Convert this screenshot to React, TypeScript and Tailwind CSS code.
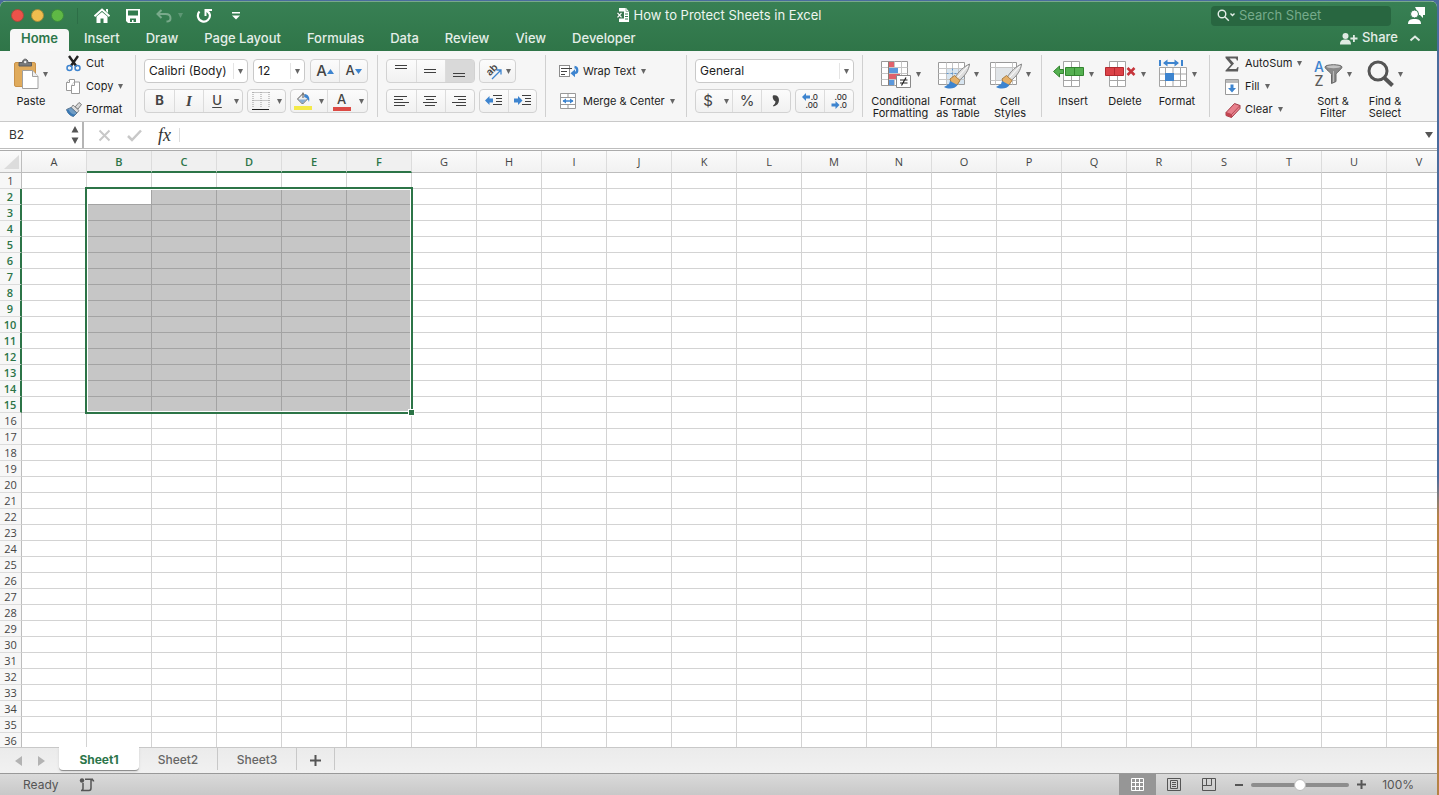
import React from 'react';

const COLUMNS = 'ABCDEFGHIJKLMNOPQRSTUV'.split('');
const ROWS = Array.from({ length: 36 }, (_, i) => i + 1);
const TABS = ['Home', 'Insert', 'Draw', 'Page Layout', 'Formulas', 'Data', 'Review', 'View', 'Developer'];
const SHEETS = ['Sheet1', 'Sheet2', 'Sheet3'];

const isSelectedCol = (i: number) => i >= 1 && i <= 5;
const isSelectedRow = (row: number) => row >= 2 && row <= 15;

const Caret = ({ className = 'text-[#666]' }: { className?: string }) => (
  <svg className={`shrink-0 ${className}`} width="5" height="5" viewBox="0 0 5 5" fill="currentColor">
    <path d="M0 0h5L2.500 5z" />
  </svg>
);

/* ---------- Title bar icons ---------- */

const HomeIcon = () => (
  <svg width="18" height="16" viewBox="0 0 18 16" fill="none">
    <path d="M1.500 8.200 9 1.600l7.500 6.600" stroke="#fff" strokeWidth="2" />
    <path d="M13 1h2v4l-2-2z" fill="#fff" />
    <path d="M3.500 8.500 9 4l5.500 4.500V15h-4v-4.500h-3V15h-4z" fill="#fff" />
  </svg>
);

const SaveIcon = () => (
  <svg width="14" height="14" viewBox="0 0 14 14">
    <path d="M0 0h14v14H2l-2-2z" fill="#fff" />
    <path d="M2 1.500h10v5H2zM4 9.500h6V13H7.500v-2H6v2H4z" fill="#337b4f" />
  </svg>
);

const UndoIcon = () => (
  <svg width="16" height="14" viewBox="0 0 16 14" fill="none" stroke="#79aa8b" strokeWidth="2">
    <path d="M5.500 1 1.500 5l4 4M2 5h7.500C13 5 14.500 7 14.500 9.200c0 2-1.500 3.300-4 3.300" />
  </svg>
);

const RedoIcon = () => (
  <svg width="17" height="16" viewBox="0 0 17 16" fill="none" stroke="#fff" strokeWidth="2.200">
    <path d="M3.500 3.500A6 6 0 1 0 13.800 6.500Q13 4 10 2.500" />
    <path d="M9.500 8V2H16" strokeWidth="2" />
  </svg>
);

const CustomizeIcon = () => (
  <svg width="8" height="8" viewBox="0 0 8 8" fill="#fff">
    <path d="M0 0h8v1.500H0zM0 3.500h8l-4 4z" />
  </svg>
);

const ExcelFileIcon = () => (
  <svg width="14" height="15" viewBox="0 0 14 15">
    <path d="M3 0h7l3 3.500V14H3z" fill="#fff" />
    <path d="M10 0v3.500h3" fill="none" stroke="#9db9a8" />
    <path d="M9 6h3M9 8.500h3M9 11h3" stroke="#377d54" />
    <path d="M0 3.500h8v7H0z" fill="#38754f" />
    <path d="m1.500 4.800 4 4.500m0-4.500-4 4.500" stroke="#fff" strokeWidth="1.200" />
  </svg>
);

const SearchIcon = () => (
  <svg width="19" height="13" viewBox="0 0 19 13" fill="none" stroke="#e4eee8" strokeWidth="1.400" className="shrink-0">
    <circle cx="5" cy="5" r="3.800" />
    <path d="m7.800 7.800 4 4M13.500 4.500l2 2 2-2" />
  </svg>
);

const FeedbackIcon = () => (
  <svg width="19" height="19" viewBox="0 0 19 19" fill="#fff">
    <path d="M8 1h10v8h-2v3l-3-3h-1z" />
    <circle cx="7.500" cy="8" r="4" stroke="#377d54" />
    <path d="M1 18c0-4 2.500-5 6.500-5s6.500 1 6.500 5z" />
  </svg>
);

const ShareIcon = () => (
  <svg width="18" height="13" viewBox="0 0 18 13" fill="#dfeae3">
    <circle cx="5.500" cy="4" r="3" />
    <path d="M0 12.500c0-4 2-5 5.500-5s5.500 1 5.500 5zM13 3h1.800v2.600h2.700v1.800h-2.700V10H13V7.400h-2.600V5.600H13z" />
  </svg>
);

/* ---------- Ribbon icons ---------- */

const PasteIcon = () => (
  <svg width="26" height="32" viewBox="0 0 26 32">
    <rect x="0.500" y="4.500" width="21" height="24" rx="1.500" fill="#e0ab5c" stroke="#c9924a" />
    <path d="M5 8V4.500h3.500C8.500 0 14 0 14 4.500h3.500V8z" fill="#77797b" stroke="#5c5e60" />
    <circle cx="11.200" cy="4" r="1.200" fill="#f0f0f0" />
    <path d="M8.500 12.500h10l5.500 6v12H8.500z" fill="#fff" stroke="#a0a0a0" />
    <path d="M18.500 12.500v6H24" fill="#eee" stroke="#a0a0a0" />
  </svg>
);

const CutIcon = () => (
  <svg width="16" height="17" viewBox="0 0 16 17" fill="none">
    <path d="m3 1 7.500 10.500M12 1 4.500 11.500" stroke="#222" strokeWidth="2.400" />
    <circle cx="3.500" cy="13" r="2.500" stroke="#3d84cf" strokeWidth="1.500" />
    <circle cx="11.500" cy="13" r="2.500" stroke="#3d84cf" strokeWidth="1.500" />
  </svg>
);

const CopyIcon = () => (
  <svg width="16" height="17" viewBox="0 0 16 17" fill="#fff" stroke="#999">
    <path d="M5.500 12.500H.5v-8l3-3h5v3" />
    <path d="M3.500 1.500v3h-3" />
    <path d="M5.500 7.500 8.500 4h5v11.500h-8z" />
    <path d="M8.500 4v3.500h-3" />
  </svg>
);

const BrushIcon = () => (
  <svg width="16" height="15" viewBox="0 0 16 15">
    <path d="m9 5 4-4.500 2.500 2L12 7z" fill="#d8d8d8" stroke="#7c7c7c" />
    <path d="m7 3 6 5.500-2 2.500-6-5z" fill="#ddd" stroke="#888" />
    <path d="M5 5.500 11 11l-3.500 3.500C4.500 14 1.500 11 .5 7.500z" fill="#6f9cc4" stroke="#5b7690" />
    <path d="M.5 8c1 3.500 4 6 7 6.500l2-2c-3 0-6-2-7-5z" fill="#3a78b3" />
  </svg>
);

const LinesIcon = ({ rows }: { rows: [number, number, number][] }) => (
  <svg width="16" height="16" viewBox="0 0 16 16" stroke="#3f3f3f" strokeWidth="1">
    {rows.map(([y, x1, x2]) => (
      <path key={y} d={`M${x1} ${y}.5H${x2}`} />
    ))}
  </svg>
);

const OrientationIcon = () => (
  <svg width="20" height="20" viewBox="0 0 20 20" fill="none" className="overflow-visible">
    <text x="2" y="12" transform="rotate(-45 8 9)" fontSize="10" fontFamily="Inter, sans-serif" fontWeight="600" fill="#444">ab</text>
    <path d="m8 18 8.500-8.500M12.500 9H17v4.500" stroke="#3d84cf" strokeWidth="1.300" />
  </svg>
);

const IndentIcon = ({ out }: { out?: boolean }) => (
  <svg width="18" height="14" viewBox="0 0 18 14">
    <path d="M8 1.500h9M11 4.500h6M11 7.500h6M8 10.500h9" stroke="#3f3f3f" />
    {out ? (
      <path d="M0 6.500 4.500 2v2.500H8v4H4.500V11z" fill="#3d84cf" />
    ) : (
      <path d="M8.500 6.500 4 2v2.500H0v4h4V11z" fill="#3d84cf" />
    )}
  </svg>
);

const WrapIcon = () => (
  <svg width="20" height="14" viewBox="0 0 20 14" fill="none">
    <rect x="0.500" y="1.500" width="10" height="11" fill="#fff" stroke="#8c8c8c" />
    <path d="M2 4.500h11M2 7.500h6M2 10.500h4" stroke="#444" />
    <path d="M15.500 3c3.500.5 3.500 5.500.5 6" stroke="#3d84cf" strokeWidth="2.400" />
    <path d="m11.500 9.200 4.500-4v8z" fill="#3d84cf" />
  </svg>
);

const MergeIcon = () => (
  <svg width="18" height="18" viewBox="0 0 18 18" fill="#fff" stroke="#999">
    <path d="M1.500 1.500h15v15h-15zM1.500 5.500h15M1.500 12.500h15M9 1.500v4M9 12.500v4" />
    <path d="M4 9h10" stroke="#3d84cf" strokeWidth="1.500" />
    <path d="M7 6.500v5L3.500 9zM11 6.500v5L14.500 9z" fill="#3d84cf" stroke="none" />
  </svg>
);

const BorderIcon = () => (
  <svg width="18" height="20" viewBox="0 0 18 20" fill="none" stroke="#999">
    <path d="M.5 1.500h17M1 1v16M9 1v16M17 1v16M.5 9.500h17" strokeDasharray="1 1" />
    <path d="M0 18.500h17" stroke="#222" />
  </svg>
);

const FillColorIcon = () => (
  <svg width="18" height="20" viewBox="0 0 18 20">
    <path d="m3.500 8 5.500-5.500 5 5-5.500 5.500z" fill="#eee" stroke="#555" />
    <path d="M9 7V1.500" stroke="#555" />
    <path d="M11 3c4 1 5 4 4 8-1-3-2-4-5-5z" fill="#3d84cf" />
    <path d="M4.500 8.500h8l-4 4z" fill="#86aed6" />
    <path d="M0 15h18v4H0z" fill="#f4ea49" />
  </svg>
);

const DecimalIcon = ({ increase }: { increase?: boolean }) => (
  <svg width="18" height="18" viewBox="0 0 18 18" fontFamily="Inter, sans-serif" fontSize="8" fontWeight="500" fill="#333" textAnchor="end">
    <text x="17" y="8">{increase ? '.0' : '.00'}</text>
    <text x="17" y="16">{increase ? '.00' : '.0'}</text>
    {increase ? (
      <path d="M1 5l4-4v2.500h4v3H5V9z" fill="#3d84cf" />
    ) : (
      <path d="M9.500 13 5.500 9v2.500h-4v3h4V17z" fill="#3d84cf" />
    )}
  </svg>
);

const ConditionalIcon = () => (
  <svg width="32" height="30" viewBox="0 0 32 30">
    <path d="M.5 2.500h26v24H.5z" fill="#fff" stroke="#9a9a9a" />
    <path d="M7.500 2.500v24M13.500 2.500v24M20.500 2.500v24M.5 8.500h26M.5 14.500h26M.5 20.500h26" stroke="#c6c6c6" />
    <path d="M8 3h5v5H8zM8 15h11v5H8z" fill="#e0616b" />
    <path d="M8 9h9v5H8zM8 21h5v5H8z" fill="#5b98dc" />
    <path d="M7.500 2.500v24" stroke="#8c7d75" />
    <path d="M15.500 16.500h14v12h-14z" fill="#fff" stroke="#8a8a8a" />
    <path d="M19 21h7.500M19 24h7.500M25 18.500l-4.500 8" stroke="#222" strokeWidth="1.200" fill="none" />
  </svg>
);

const TableBrush = () => (
  <>
    <path d="M17 18.500C21 12 25.500 8 31.500 5 31 11 27 17 20.500 22z" fill="#dedede" stroke="#888" />
    <path d="M18.500 19.500 30 7" stroke="#fff" />
    <path d="m12 20 4.500-3.500 5.500 5-3 4.500-5 .5z" fill="#e5b068" stroke="#a77d43" />
    <path d="m12 22-1 3-5 3c4.500 2.500 11 2 13.500-2z" fill="#3d84cf" />
  </>
);

const FormatTableIcon = () => (
  <svg width="33" height="30" viewBox="0 0 33 30">
    <path d="M.5 3.500h26v22H.5z" fill="#fff" stroke="#9a9a9a" />
    <path d="M9 10h17v15H9z" fill="#d7e5f1" />
    <path d="M8.500 3.500v22M14.500 3.500v22M20.500 3.500v22M.5 9.500h26M.5 14.500h26M.5 20.500h26" stroke="#c6c6c6" fill="none" />
    <path d="M8.500 14.500h13M14.500 9.500v11" stroke="#6199d0" strokeDasharray="2 2" />
    <TableBrush />
  </svg>
);

const CellStylesIcon = () => (
  <svg width="33" height="30" viewBox="0 0 33 30">
    <path d="M.5 3.500h26v22H.5z" fill="#fff" stroke="#9a9a9a" />
    <path d="M5.500 3.500v22M22.500 3.500v22M.5 8.500h26M.5 21.500h26" stroke="#c6c6c6" />
    <path d="M6 9h16v12H6z" fill="#e1e5e8" />
    <TableBrush />
  </svg>
);

const InsertCellsIcon = () => (
  <svg width="33" height="30" viewBox="0 0 33 30">
    <path d="M10.500 2.500h16v25h-16zM18.500 2.500v25M10.500 21.500h16" fill="#fff" stroke="#a5a5a5" />
    <path d="M12.500 8.500h18v8h-18z" fill="#55b051" stroke="#33852f" />
    <path d="M21.500 8.500v8" stroke="#33852f" />
    <path d="m.5 12.500 6-5.500v3.500h4v4h-4V18z" fill="#55b051" stroke="#33852f" />
  </svg>
);

const DeleteCellsIcon = () => (
  <svg width="33" height="30" viewBox="0 0 33 30">
    <path d="M4.500 2.500h16v25h-16zM12.500 2.500v25M4.500 21.500h16" fill="#fff" stroke="#a5a5a5" />
    <path d="M.5 8.500h18v8H.5z" fill="#db4147" stroke="#b3292f" />
    <path d="M9.500 8.500v8" stroke="#b3292f" />
    <path d="m22.500 9 7 7m0-7-7 7" stroke="#c6343b" strokeWidth="2.500" />
  </svg>
);

const FormatCellsIcon = () => (
  <svg width="31" height="30" viewBox="0 0 31 30">
    <path d="M1.500 8.500h27v19h-27zM7.500 8.500v19M15 8.500v19M22.500 8.500v19M1.500 15h27M1.500 21.500h27" fill="#fff" stroke="#a5a5a5" />
    <path d="M7 14h9v8H7z" fill="#3d84cf" />
    <path d="M2 1v6M24 1v6M7 4h12" stroke="#3d84cf" strokeWidth="2" />
    <path d="M9.500.5v7L5 4zM16.500.5v7L21 4z" fill="#3d84cf" />
  </svg>
);

const SumIcon = () => (
  <svg width="14" height="16" viewBox="0 0 14 16">
    <path d="M.5.500h12.500v4h-1.200C11.500 3 11 2.500 9.500 2.500H4.500L9 7.500 4 13H10c1.500 0 2-.5 2.500-2h1L13 15.500H.5v-1L6 8.500.5 2z" fill="#5c5c5c" />
  </svg>
);

const FillIcon = () => (
  <svg width="14" height="16" viewBox="0 0 14 16">
    <path d="M.5.500h13v15H.5z" fill="#fff" stroke="#999" />
    <path d="M1 1h12v3H1z" fill="#bbb" />
    <path d="M5.500 5.500h3V9H11l-4 4.500L3 9h2.500z" fill="#3d84cf" />
  </svg>
);

const EraserIcon = () => (
  <svg width="16" height="16" viewBox="0 0 16 16">
    <path d="m1 10.500 8.500-9 5.500 2v3l-8.500 9-5.500-2z" fill="#e8808c" stroke="#a33d49" />
    <path d="m1 10.500 5.500 2 8.500-9M6.500 12.500v3" fill="none" stroke="#b34b57" />
    <path d="m1 10.500 5.500 2v3l-5.500-2z" fill="#c2434f" />
  </svg>
);

const SortFilterIcon = () => (
  <span className="flex items-center">
    <span className="flex flex-col items-center text-[14px] leading-[14px] font-medium">
      <span className="text-[#3d84cf]">A</span>
      <span className="text-[#5b5b5b]">Z</span>
    </span>
    <svg width="20" height="24" viewBox="0 0 20 24">
      <path d="M1 5c0-3 17-3 17 0 0 2-5.500 5.500-6 7.500v7l-4.500 2v-9C7 10.500 1 7 1 5z" fill="#8a8a8a" stroke="#666" />
      <ellipse cx="9.500" cy="4.800" rx="7" ry="1.500" fill="#c3c3c3" />
      <path d="M9.500 9v11" stroke="#bcbcbc" />
    </svg>
  </span>
);

const FindIcon = () => (
  <svg width="28" height="30" viewBox="0 0 28 30" fill="none" stroke="#555">
    <circle cx="11" cy="12" r="9" strokeWidth="3" />
    <path d="m17.500 19 8 7.500" strokeWidth="4" />
  </svg>
);

/* ---------- Ribbon building blocks ---------- */

const Group = ({ children, className = '' }: { children: React.ReactNode; className?: string }) => (
  <div className={`flex h-[62px] shrink-0 border-r border-[#d0d0d0] ${className}`}>{children}</div>
);

const ButtonBox = ({ children }: { children: React.ReactNode }) => (
  <div className="flex h-6 rounded border border-[#d2d2d2] bg-linear-to-b from-[#fcfcfc] to-[#f1f1f1]">
    {children}
  </div>
);

interface ToolProps {
  label: string;
  children: React.ReactNode;
  className?: string;
}

const Tool = ({ label, children, className = 'w-[29px]' }: ToolProps) => (
  <button aria-label={label} className={`flex shrink-0 items-center justify-center border-[#dcdcdc] not-first:border-l ${className}`}>
    {children}
  </button>
);

const CaretTool = ({ label }: { label: string }) => (
  <button aria-label={label} className="flex w-3 shrink-0 items-center justify-center">
    <Caret />
  </button>
);

interface BigButtonProps {
  icon: React.ReactNode;
  lines: string[];
  className: string;
}

const BigButton = ({ icon, lines, className }: BigButtonProps) => (
  <button className={`flex shrink-0 flex-col items-center self-start text-[11px] leading-3 whitespace-nowrap ${className}`}>
    <span className="mt-[3px] mb-[5px] flex h-8 items-center gap-[3px]">
      {icon}
      <Caret />
    </span>
    {lines.map((line) => (
      <span key={line}>{line}</span>
    ))}
  </button>
);

interface SmallButtonProps {
  icon: React.ReactNode;
  label: string;
  caret?: boolean;
}

const SmallButton = ({ icon, label, caret }: SmallButtonProps) => (
  <button className="flex h-[23px] shrink-0 items-center text-[11px] whitespace-nowrap">
    <span className="flex w-5 shrink-0">{icon}</span>
    {label}
    {caret && <span className="ml-[5px]"><Caret /></span>}
  </button>
);

const SmallWide = ({ icon, label }: { icon: React.ReactNode; label: string }) => (
  <button className="flex h-6 items-center text-[11px] whitespace-nowrap">
    <span className="flex w-6 shrink-0">{icon}</span>
    {label}
    <span className="ml-[5px]"><Caret /></span>
  </button>
);

const Picker = ({ label, value, className }: { label: string; value: string; className: string }) => (
  <label className={`flex h-6 items-center rounded border border-[#c9c9c9] bg-white pr-1 ${className}`}>
    <select aria-label={label} className="h-full min-w-0 flex-1 appearance-none pl-1 text-xs outline-none">
      <option>{value}</option>
    </select>
    <span className="mr-1 h-4 w-px bg-[#e4e4e4]" />
    <Caret />
  </label>
);

const TitleBar = () => (
  <div className="grid h-[27px] grid-cols-[1fr_auto_1fr] items-center">
    <div className="flex items-center pl-[11px]">
      <div className="flex gap-[7px]">
        <button aria-label="Close" className="size-[13px] rounded-full border border-[#a94a3c] bg-[#ec524a]" />
        <button aria-label="Minimize" className="size-[13px] rounded-full border border-[#a68b3c] bg-[#f0bd4e]" />
        <button aria-label="Zoom" className="size-[13px] rounded-full border border-[#3c8c3c] bg-[#5fb845]" />
      </div>
      <span className="ml-[13px] h-4 w-px bg-[#2d6e47]" />
      <div className="ml-[15px] flex items-center">
        <button aria-label="Home"><HomeIcon /></button>
        <button aria-label="Save" className="ml-[15px]"><SaveIcon /></button>
        <button aria-label="Undo" className="ml-4"><UndoIcon /></button>
        <button aria-label="Undo history" className="ml-1.5"><Caret className="text-[#5d9774]" /></button>
        <button aria-label="Repeat" className="ml-[13px]"><RedoIcon /></button>
        <button aria-label="Customize toolbar" className="ml-[19px]"><CustomizeIcon /></button>
      </div>
    </div>
    <h1 className="flex items-center gap-1 text-[13px] text-[#eef5f0]">
      <ExcelFileIcon />
      How to Protect Sheets in Excel
    </h1>
    <div className="flex items-center justify-end gap-4 pr-[11px]">
      <label className="flex h-5 w-[180px] items-center rounded bg-[#286640] pl-1.5">
        <SearchIcon />
        <input
          aria-label="Search Sheet"
          placeholder="Search Sheet"
          className="ml-[3px] w-full min-w-0 text-[13px] text-white outline-none placeholder:text-[#76ab8b]"
        />
      </label>
      <button aria-label="Feedback"><FeedbackIcon /></button>
    </div>
  </div>
);

const TabBar = () => (
  <nav className="flex h-[22px] items-stretch pl-2.5 text-[13px] font-medium text-[#e4eee8]">
    {TABS.map((tab) => (
      <button
        key={tab}
        className={
          tab === 'Home'
            ? 'mr-0.5 rounded-t-sm bg-[#f7f7f7] px-[11px] pb-0.5 font-semibold text-[#2c764a]'
            : 'px-[13px] pb-0.5'
        }
      >
        {tab}
      </button>
    ))}
    <button className="ml-auto flex items-center gap-1 pb-1"><ShareIcon />Share</button>
    <button aria-label="Collapse ribbon" className="mr-4 ml-[11px] pb-1">
      <svg width="12" height="8" viewBox="0 0 12 8" fill="none" stroke="#dfeae3" strokeWidth="2">
        <path d="m1.500 6.500 4.500-4 4.500 4" />
      </svg>
    </button>
  </nav>
);

const Ribbon = () => (
  <div className="flex h-[71px] items-start overflow-hidden border-b border-[#c9c9c9] bg-[#f6f6f6] pt-1 text-[#1c1c1c]">
    <Group className="w-[136px]">
      <BigButton icon={<PasteIcon />} lines={['Paste']} className="ml-2 w-[46px]" />
      <div className="-mt-[3px] ml-3 flex flex-col">
        <SmallButton icon={<CutIcon />} label="Cut" />
        <SmallButton icon={<CopyIcon />} label="Copy" caret />
        <SmallButton icon={<BrushIcon />} label="Format" />
      </div>
    </Group>

    <Group className="w-[242px] flex-col gap-1.5 pt-1 pl-2">
      <div className="flex gap-[5px]">
        <Picker label="Font" value="Calibri (Body)" className="w-[104px]" />
        <Picker label="Font size" value="12" className="w-[52px]" />
        <ButtonBox>
          <Tool label="Increase font size" className="w-7">
            <span className="text-[15px] font-medium text-[#444]">A</span>
            <svg width="7" height="5" viewBox="0 0 7 5"><path d="M0 5h7L3.500 0z" fill="#3d84cf" /></svg>
          </Tool>
          <Tool label="Decrease font size" className="w-7">
            <span className="text-[13px] font-medium text-[#444]">A</span>
            <svg width="7" height="5" viewBox="0 0 7 5"><path d="M0 0h7L3.500 5z" fill="#3d84cf" /></svg>
          </Tool>
        </ButtonBox>
      </div>
      <div className="flex gap-1">
        <ButtonBox>
          <Tool label="Bold"><b className="text-[13px] text-[#444]">B</b></Tool>
          <Tool label="Italic"><i className="font-['Liberation_Serif',serif] text-[15px] font-bold text-[#444]">I</i></Tool>
          <Tool label="Underline" className="w-[27px]"><u className="text-[13px] font-medium text-[#444] underline-offset-2">U</u></Tool>
          <CaretTool label="Underline style" />
        </ButtonBox>
        <ButtonBox>
          <Tool label="Borders" className="w-[25px]"><BorderIcon /></Tool>
          <CaretTool label="Border style" />
        </ButtonBox>
        <ButtonBox>
          <Tool label="Fill color" className="w-6"><FillColorIcon /></Tool>
          <CaretTool label="Choose fill color" />
          <Tool label="Font color" className="w-7">
            <span className="flex h-5 w-[18px] flex-col items-center border-b-4 border-[#dc4a44] text-[13px] leading-4 font-medium text-[#444]">A</span>
          </Tool>
          <CaretTool label="Choose font color" />
        </ButtonBox>
      </div>
    </Group>

    <Group className="w-[168px] flex-col gap-1.5 pt-1 pl-2">
      <div className="flex gap-1">
        <ButtonBox>
          <Tool label="Top align"><LinesIcon rows={[[2, 1, 13], [5, 1, 13]]} /></Tool>
          <Tool label="Middle align"><LinesIcon rows={[[6, 1, 13], [9, 1, 13]]} /></Tool>
          <Tool label="Bottom align" className="w-[29px] bg-[#d9d9d9]"><LinesIcon rows={[[10, 1, 13], [13, 1, 13]]} /></Tool>
        </ButtonBox>
        <ButtonBox>
          <Tool label="Orientation" className="w-[35px] gap-0.5"><OrientationIcon /><Caret /></Tool>
        </ButtonBox>
      </div>
      <div className="flex gap-1">
        <ButtonBox>
          <Tool label="Align left"><LinesIcon rows={[[3, 0, 13], [6, 0, 9], [9, 0, 15], [12, 0, 11]]} /></Tool>
          <Tool label="Center"><LinesIcon rows={[[3, 1, 13], [6, 3, 11], [9, 0, 14], [12, 2, 12]]} /></Tool>
          <Tool label="Align right"><LinesIcon rows={[[3, 2, 14], [6, 6, 14], [9, 0, 14], [12, 4, 14]]} /></Tool>
        </ButtonBox>
        <ButtonBox>
          <Tool label="Decrease indent" className="w-7"><IndentIcon out /></Tool>
          <Tool label="Increase indent" className="w-7"><IndentIcon /></Tool>
        </ButtonBox>
      </div>
    </Group>

    <Group className="w-[141px] flex-col gap-1.5 pt-1 pl-[13px]">
      <SmallWide icon={<WrapIcon />} label="Wrap Text" />
      <SmallWide icon={<MergeIcon />} label="Merge & Center" />
    </Group>

    <Group className="w-[176px] flex-col gap-1.5 pt-1 pl-2">
      <Picker label="Number format" value="General" className="w-[159px]" />
      <div className="flex gap-1">
        <ButtonBox>
          <Tool label="Currency" className="w-6"><span className="text-[15px] text-[#444]">$</span></Tool>
          <CaretTool label="Currency format" />
          <Tool label="Percent"><span className="text-[15px] text-[#444]">%</span></Tool>
          <Tool label="Comma style">
            <svg width="8" height="12" viewBox="0 0 8 12"><path d="M1 .500C4-.5 7 1 7 5c0 3.500-2 5.500-5.500 6.500L1 10.500c1.500-1 2.500-2.500 2.500-4C1.500 5.500 0 2.500 1 .500z" fill="#444" /></svg>
          </Tool>
        </ButtonBox>
        <ButtonBox>
          <Tool label="Increase decimal" className="w-7"><DecimalIcon increase /></Tool>
          <Tool label="Decrease decimal"><DecimalIcon /></Tool>
        </ButtonBox>
      </div>
    </Group>

    <Group className="w-[179px] pl-2">
      <BigButton icon={<ConditionalIcon />} lines={['Conditional', 'Formatting']} className="w-[59px]" />
      <BigButton icon={<FormatTableIcon />} lines={['Format', 'as Table']} className="ml-1 w-[48px]" />
      <BigButton icon={<CellStylesIcon />} lines={['Cell', 'Styles']} className="ml-1 w-[48px]" />
    </Group>

    <Group className="w-[168px] pl-[7px]">
      <BigButton icon={<InsertCellsIcon />} lines={['Insert']} className="w-[48px]" />
      <BigButton icon={<DeleteCellsIcon />} lines={['Delete']} className="ml-1 w-[48px]" />
      <BigButton icon={<FormatCellsIcon />} lines={['Format']} className="ml-1 w-[48px]" />
    </Group>

    <div className="flex h-[62px] pl-[15px]">
      <div className="-mt-[3px] flex w-[80px] flex-col">
        <SmallButton icon={<SumIcon />} label="AutoSum" caret />
        <SmallButton icon={<FillIcon />} label="Fill" caret />
        <SmallButton icon={<EraserIcon />} label="Clear" caret />
      </div>
      <BigButton icon={<SortFilterIcon />} lines={['Sort &', 'Filter']} className="ml-1 w-[48px]" />
      <BigButton icon={<FindIcon />} lines={['Find &', 'Select']} className="ml-1 w-[48px]" />
    </div>
  </div>
);

const FormulaBar = () => (
  <div className="flex h-[27px] items-stretch border-b border-[#bdbdbd] bg-white">
    <div className="flex w-[84px] shrink-0 items-center border-r-2 border-[#b5b5b5] pr-[3px]">
      <input aria-label="Name box" defaultValue="B2" className="w-full min-w-0 pl-[9px] text-xs text-[#333] outline-none" />
      <svg width="8" height="18" viewBox="0 0 8 18" className="shrink-0" fill="#555">
        <path d="M4 0l3.500 6.500h-7zM4 18l3.500-6.500h-7z" />
      </svg>
    </div>
    <button aria-label="Cancel" className="ml-3.5">
      <svg width="13" height="13" viewBox="0 0 13 13" stroke="#c8c8c8" strokeWidth="2"><path d="m1.500 1.500 10 10m0-10-10 10" /></svg>
    </button>
    <button aria-label="Enter" className="ml-4">
      <svg width="15" height="13" viewBox="0 0 15 13" fill="none" stroke="#c8c8c8" strokeWidth="2.500"><path d="m1 7 4 4 9-9.500" /></svg>
    </button>
    <button aria-label="Insert function" className="ml-4 font-['Liberation_Serif',serif] text-lg leading-none text-[#333] italic">fx</button>
    <span className="my-1.5 ml-2 w-px bg-[#ddd]" />
    <input aria-label="Formula" className="min-w-0 flex-1 px-2 text-xs outline-none" />
    <button aria-label="Expand formula bar" className="mr-1 flex items-center">
      <svg width="8" height="6" viewBox="0 0 8 6" fill="#555"><path d="M0 0h8L4 6z" /></svg>
    </button>
  </div>
);

const Grid = () => (
  <div className="relative mt-px min-h-0 flex-1 overflow-hidden border-t border-[#ababab] bg-white">
    <table className="w-[1452px] table-fixed border-separate border-spacing-0 font-['Open_Sans','Noto_Sans',sans-serif] text-[11px] text-[#444]">
      <thead>
        <tr className="h-[22px] bg-linear-to-b from-[#fbfbfb] to-[#f1f1f1]">
          <th className="w-[22px] border-r border-b border-[#bdbdbd] p-0">
            <svg width="17" height="16" viewBox="0 0 17 16" className="ml-1"><path d="M15 1v14H0z" fill="#dcdcdc" /></svg>
          </th>
          {COLUMNS.map((col, i) => (
            <th
              key={col}
              scope="col"
              className={`w-[65px] border-r border-r-[#dcdcdc] p-0 pt-0.5 ${
                isSelectedCol(i)
                  ? 'border-b-2 border-b-[#2c7447] bg-[#f0f0f0] font-semibold text-[#2c7447]'
                  : 'border-b border-b-[#bdbdbd] font-normal'
              }`}
            >
              {col}
            </th>
          ))}
        </tr>
      </thead>
      <tbody>
        {ROWS.map((row) => (
          <tr key={row} className="h-4 leading-[15px]">
            <th
              scope="row"
              className={`border-b border-b-[#dcdcdc] bg-[#f7f7f7] p-0 ${
                isSelectedRow(row)
                  ? 'border-r-2 border-r-[#2c7447] font-semibold text-[#2c7447]'
                  : 'border-r border-r-[#bdbdbd] font-normal'
              }`}
            >
              {row}
            </th>
            {COLUMNS.map((col, i) => {
              const selected = isSelectedRow(row) && isSelectedCol(i);
              const active = row === 2 && i === 1;
              return (
                <td
                  key={col}
                  className={`border-r border-b p-0 ${
                    selected ? `border-[#a3a3a3] ${active ? 'bg-white' : 'bg-[#c6c6c6]'}` : 'border-[#d3d3d3]'
                  }`}
                />
              );
            })}
          </tr>
        ))}
      </tbody>
    </table>
    {/* Selection outline B2:F15 */}
    <div className="pointer-events-none absolute top-9 left-[85px] h-[227px] w-[328px] border-2 border-[#2c7447]">
      <div className="size-full border border-white" />
      <div className="absolute -right-1 -bottom-1 size-[7px] border border-white bg-[#2c7447]" />
    </div>
  </div>
);

const SheetBar = () => (
  <div className="flex h-[26px] shrink-0 items-start border-t border-[#c8c8c8] bg-linear-to-b from-[#ebebeb] to-[#f1f1f1] text-xs font-medium text-[#666]">
    <div className="flex h-full w-[59px] items-center justify-center gap-4">
      <button aria-label="Previous sheet"><svg width="7" height="10" viewBox="0 0 7 10" fill="#b3b3b3"><path d="M7 0v10L0 5z" /></svg></button>
      <button aria-label="Next sheet"><svg width="7" height="10" viewBox="0 0 7 10" fill="#b3b3b3"><path d="M0 0v10l7-5z" /></svg></button>
    </div>
    {SHEETS.map((sheet) => (
      <button
        key={sheet}
        className={
          sheet === 'Sheet1'
            ? '-mt-px h-6 w-20 rounded-b-sm border-b border-[#8f8f8f] bg-white pt-0.5 font-bold text-[#2c764a] shadow-sm'
            : 'h-[22px] w-[79px] border-r border-[#c8c8c8] pt-0.5'
        }
      >
        {sheet}
      </button>
    ))}
    <button aria-label="Add sheet" className="flex h-[22px] w-[38px] items-center justify-center border-r border-[#c8c8c8] pt-0.5">
      <svg width="11" height="11" viewBox="0 0 11 11" stroke="#555" strokeWidth="2"><path d="M5.500 0v11M0 5.500h11" /></svg>
    </button>
  </div>
);

const StatusBar = () => (
  <footer className="flex h-[22px] shrink-0 items-center border-t border-[#999] bg-linear-to-b from-[#dadada] to-[#c8c8c8] text-xs text-[#555]">
    <span className="ml-[23px]">Ready</span>
    <button aria-label="Record macro" className="ml-5">
      <svg width="16" height="14" viewBox="0 0 16 14" fill="none" stroke="#555" strokeWidth="1.500">
        <circle cx="3" cy="2.500" r="2.200" fill="#555" stroke="none" />
        <path d="M6 1.200h8M4 5v5.500c0 1.500-.5 2-2 2h8c1.500 0 2-1 2-2.500V1.500c2 0 2.500.5 2.500 2" />
      </svg>
    </button>
    <div className="ml-auto flex h-full items-center">
      <button aria-label="Normal view" className="flex h-full w-[37px] items-center justify-center bg-[#969696]">
        <svg width="13" height="13" viewBox="0 0 13 13" fill="none" stroke="#fff"><path d="M.5.500h12v12H.5zM4.500.5v12M8.500.5v12M.5 4.500h12M.5 8.500h12" /></svg>
      </button>
      <button aria-label="Page layout view" className="flex w-[35px] justify-center">
        <svg width="14" height="13" viewBox="0 0 14 13" fill="none" stroke="#555"><path d="M.5.500h13v12H.5zM3.500 2.500h7v8h-7zM5 4.500h4M5 6.500h4M5 8.500h4" /></svg>
      </button>
      <button aria-label="Page break view" className="flex w-9 justify-center">
        <svg width="14" height="13" viewBox="0 0 14 13" fill="none" stroke="#555"><path d="M.5.500h13v12H.5zM4.500.5v7M9.500.5v7M.5 7.500h9" /></svg>
      </button>
      <button aria-label="Zoom out" className="ml-2 h-0.5 w-2 bg-[#555]" />
      <input
        type="range"
        aria-label="Zoom"
        defaultValue={50}
        className="mx-2 h-1 w-[98px] appearance-none rounded-full bg-[#8d8d8d] [&::-webkit-slider-thumb]:size-3 [&::-webkit-slider-thumb]:appearance-none [&::-webkit-slider-thumb]:rounded-full [&::-webkit-slider-thumb]:border [&::-webkit-slider-thumb]:border-[#bbb] [&::-webkit-slider-thumb]:bg-white"
      />
      <button aria-label="Zoom in">
        <svg width="9" height="9" viewBox="0 0 9 9" stroke="#555" strokeWidth="2"><path d="M4.500 0v9M0 4.500h9" /></svg>
      </button>
      <span className="mr-[23px] ml-4">100%</span>
    </div>
  </footer>
);

export default function App() {
  return (
    <div className="h-screen overflow-hidden bg-linear-to-b from-[#4a6c9d] from-60% to-[#b58345] to-65% pt-px pr-0.5 font-['Inter','Liberation_Sans',sans-serif]">
      <div className="flex h-full flex-col overflow-hidden rounded-t-md bg-white">
        <header className="shrink-0 border-t border-[#78a88b] bg-linear-to-b from-[#388054] to-[#2f7548]">
          <TitleBar />
          <TabBar />
        </header>
        <div className="shrink-0">
          <Ribbon />
          <FormulaBar />
        </div>
        <Grid />
        <SheetBar />
        <StatusBar />
      </div>
    </div>
  );
}
